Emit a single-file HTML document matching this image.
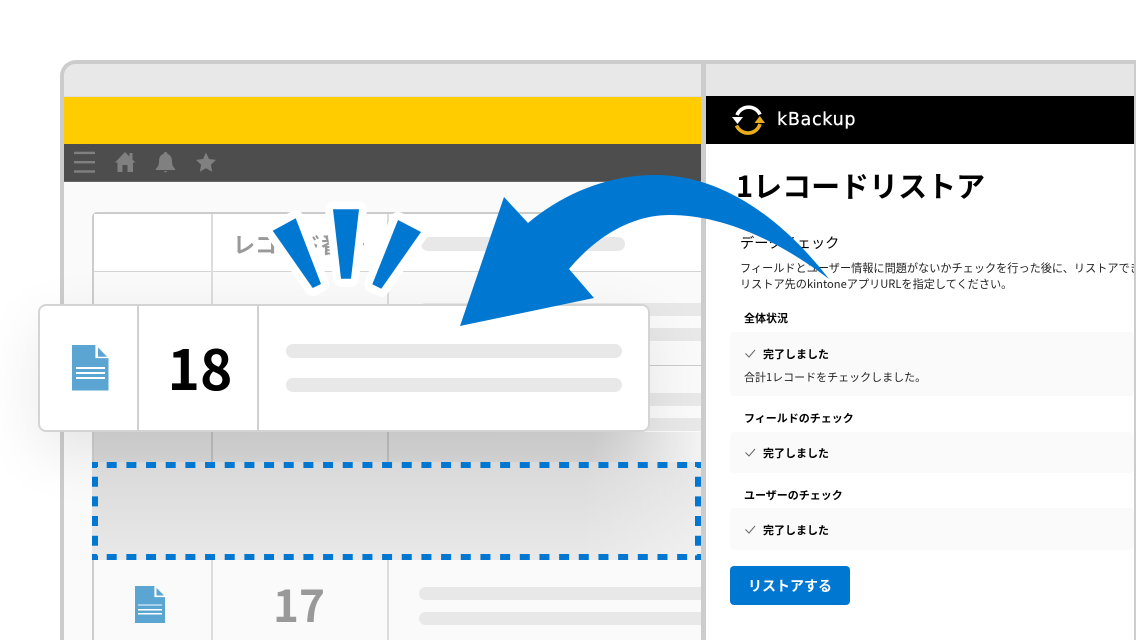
<!DOCTYPE html>
<html lang="ja"><head><meta charset="utf-8"><title>kBackup</title>
<style>
html,body{margin:0;padding:0;background:#fff}
#p{position:relative;width:1136px;height:640px;overflow:hidden;background:#fff;font-family:"Noto Sans CJK JP","Liberation Sans",sans-serif;color:#000}
#p div{position:absolute;box-sizing:border-box}
.t{white-space:nowrap;line-height:20px;height:20px}
.bar{background:#e8e8e8;border-radius:7px;height:14px}
.rb{left:419px;width:282px;border-radius:7px 0 0 7px}
.b11{font-size:11px;font-weight:700}
.box{left:730px;width:404px;background:#fafafa;border-radius:4px}
svg{position:absolute;left:0;top:0}
</style></head><body><div id="p">

<div style="left:60px;top:60px;width:1076px;height:580px;background:#fafafa;border:solid #ccc;border-width:4px 0 0 4px;border-top-left-radius:16px"></div>
<div style="left:64px;top:64px;width:637px;height:32px;background:#e8e8e8;border-top-left-radius:12px"></div>
<div style="left:64px;top:96px;width:637px;height:1px;background:#ddd"></div>
<div style="left:64px;top:97px;width:637px;height:47px;background:#fc0"></div>
<div style="left:64px;top:144px;width:637px;height:38px;background:#4d4d4d;border-bottom:1px solid #666"></div>

<svg width="1136" height="640" viewBox="0 0 1136 640" fill="#808080">
<rect x="74" y="151.7" width="21" height="2.4"/><rect x="74" y="161" width="21" height="2.4"/><rect x="74" y="170.3" width="21" height="2.4"/>
<path d="M125 152l4.500 4.500V153h3v6.500l3 3h-2.500V172H127.500v-7h-5v7H117.500V162.500H115z"/>
<path d="M165.500 152c1.300 0 2 .9 2 2 3.500 1 4.500 4 4.500 7.500 0 4 1.500 5.500 3.200 7.500v1h-19.400v-1c1.700-2 3.200-3.500 3.200-7.500 0-3.500 1-6.500 4.500-7.500 0-1.100.7-2 2-2zM163.500 171h4l-2 1.500z"/>
<path d="M206 152.500l3 6.500 7 .9-5.100 4.800 1.300 7-6.200-3.500-6.200 3.500 1.300-7-5.100-4.800 7-.9z"/>
</svg>

<!-- table -->
<div style="left:92px;top:212px;width:609px;height:428px;border:solid #ccc;border-width:2px 0 0 2px;border-top-left-radius:5px;background:#fafafa"></div>
<div style="left:94px;top:214px;width:607px;height:57px;background:#fff"></div>
<div style="left:94px;top:271px;width:607px;height:1px;background:#d4d4d4"></div>
<div style="left:94px;top:365px;width:607px;height:1px;background:#ccc"></div>
<div style="left:211px;top:214px;width:2px;height:426px;background:#dcdcdc"></div>
<div style="left:387px;top:214px;width:2px;height:426px;background:#dcdcdc"></div>
<div class="t" style="left:233px;top:233px;font-size:22px;font-weight:700;color:#999;line-height:22px;height:22px">レコード番号</div>
<div class="bar" style="left:421px;top:237px;width:204px"></div>
<div class="bar rb" style="top:302.500px;height:13.500px"></div>
<div class="bar rb" style="top:327.500px;height:13.500px"></div>
<div class="bar rb" style="top:392.500px;height:13.500px"></div>
<div class="bar rb" style="top:417.500px;height:13.500px"></div>

<!-- card shadow -->
<div style="left:38px;top:304px;width:612px;height:128px;border-radius:8px;box-shadow:0 20px 60px rgba(0,0,0,.09)"></div>
<div style="left:94px;top:432px;width:607px;height:30px;background:linear-gradient(to right,rgba(0,0,0,.14) 0,rgba(0,0,0,.14) 82%,rgba(0,0,0,.03) 100%)"></div>
<div style="left:94px;top:462px;width:607px;height:1px;background:#c8c8c8"></div>
<div style="left:92px;top:462px;width:609px;height:98px;background:linear-gradient(to bottom,#d9d9d9,#e9e9e9)"></div>
<div style="left:92px;top:462px;width:609px;height:98px;background:linear-gradient(to right,rgba(255,255,255,0) 80%,rgba(255,255,255,.35) 100%)"></div>

<!-- bottom row covers shadow -->
<div style="left:64px;top:560px;width:637px;height:80px;background:#fafafa"></div>
<div style="left:92px;top:560px;width:2px;height:80px;background:#ccc"></div>
<div style="left:211px;top:560px;width:2px;height:80px;background:#dcdcdc"></div>
<div style="left:387px;top:560px;width:2px;height:80px;background:#dcdcdc"></div>
<div class="bar rb" style="top:586.700px;height:13.500px"></div>
<div class="bar rb" style="top:611.700px;height:13.500px"></div>
<div class="t" style="left:273px;top:573px;font-size:44px;font-weight:700;color:#999;line-height:60px;height:60px;width:52px;text-align:center">17</div>
<svg width="1136" height="640" viewBox="0 0 1136 640">
<path d="M135 586h20l10 10v27h-30z" fill="#5aa5d2"/>
<path d="M155 586v10.500h10.500" fill="#fff" stroke="#fff" stroke-width="1.200"/><path d="M156.500 588l7.500 7.500h-7.500z" fill="#5aa5d2"/>
<rect x="138" y="604" width="24" height="2" fill="#a8d0e8"/><rect x="138" y="609" width="24" height="1.500" fill="#fff"/><rect x="138" y="613" width="24" height="1.500" fill="#fff"/>
<g fill="none" stroke="#0078d2" stroke-width="6" stroke-dasharray="10 9.670">
<path d="M92 465H701" stroke-dashoffset="4.970"/>
<path d="M92 557H701" stroke-dashoffset="4.970"/>
<path d="M95 462V560" stroke-dashoffset="4.970"/>
<path d="M698 462V560" stroke-dashoffset="4.970"/>
</g>
</svg>

<div style="left:38px;top:304px;width:612px;height:128px;background:#fff;border:2px solid #d4d4d4;border-radius:8px"></div>
<div style="left:137px;top:305px;width:2px;height:126px;background:#d0d0d0"></div>
<div style="left:257px;top:305px;width:2px;height:126px;background:#d0d0d0"></div>
<div class="bar" style="left:286px;top:344px;width:336px"></div>
<div class="bar" style="left:286px;top:378px;width:336px"></div>
<div class="t" style="left:160px;top:328px;width:80px;text-align:center;font-size:55px;font-weight:700;line-height:76px;height:76px">18</div>
<svg width="1136" height="640" viewBox="0 0 1136 640">
<path d="M72 345h24l12.500 12.500V390.500H72z" fill="#5aa5d2"/>
<path d="M96 345v12.500h12.500" fill="#fff" stroke="#fff" stroke-width="1.200"/><path d="M98 347.500l9 9.200h-9z" fill="#5aa5d2"/>
<rect x="76" y="367" width="29" height="2" fill="#fff"/><rect x="76" y="372" width="29" height="2" fill="#fff"/><rect x="76" y="377" width="29" height="2" fill="#fff"/>
</svg>

<!-- right panel -->
<div style="left:701px;top:64px;width:5px;height:576px;background:#ccc"></div>
<div style="left:706px;top:64px;width:428px;height:32px;background:#e6e6e6"></div>
<div style="left:706px;top:96px;width:428px;height:48px;background:#000"></div>
<div style="left:706px;top:144px;width:428px;height:496px;background:#fff"></div>
<div style="left:1134px;top:64px;width:2px;height:576px;background:#ccc"></div>
<svg width="1136" height="640" viewBox="0 0 1136 640">
<path d="M737 115A12.500 12.500 0 0 1 760 114.500" fill="none" stroke="#fff" stroke-width="3.600"/>
<path d="M732 117h11l-5.500 7z" fill="#fff"/>
<path d="M736.500 125.500A12.500 12.500 0 0 0 760 124" fill="none" stroke="#e8ac1c" stroke-width="3.600"/>
<path d="M754.500 123h10.500l-5.200-7z" fill="#e8ac1c"/>
</svg>
<div class="t" style="left:777px;top:108px;font-family:'DejaVu Sans',sans-serif;font-size:17.500px;color:#fff;line-height:24px;height:24px;letter-spacing:.7px;-webkit-text-stroke:.25px #fff">kBackup</div>
<div class="t" style="left:736px;top:165px;font-size:29px;font-weight:700;line-height:40px;height:40px">1レコードリストア</div>
<div class="t" style="left:740px;top:233px;font-size:14.200px">データチェック</div>
<div style="left:740px;top:260px;width:394px;height:32px;overflow:hidden;font-size:11.170px;line-height:16px;white-space:nowrap;color:#222">フィールドとユーザー情報に問題がないかチェックを行った後に、リストアできます。<br>リストア先のkintoneアプリURLを指定してください。</div>

<div class="t b11" style="left:744px;top:308px">全体状況</div>
<div class="box" style="top:332px;height:64px"></div>
<div class="t b11" style="left:763px;top:344px">完了しました</div>
<div class="t" style="left:744px;top:367px;font-size:11px;color:#222">合計1レコードをチェックしました。</div>
<div class="t b11" style="left:744px;top:408px">フィールドのチェック</div>
<div class="box" style="top:432px;height:41px"></div>
<div class="t b11" style="left:763px;top:443px">完了しました</div>
<div class="t b11" style="left:744px;top:485px">ユーザーのチェック</div>
<div class="box" style="top:508px;height:42px"></div>
<div class="t b11" style="left:763px;top:520px">完了しました</div>
<svg width="1136" height="640" viewBox="0 0 1136 640" fill="none" stroke="#666" stroke-width="1">
<path d="M745.500 353.500l3.500 3.500 6-7"/><path d="M745.500 452.500l3.500 3.500 6-7"/><path d="M745.500 529.500l3.500 3.500 6-7"/>
</svg>
<div style="left:730px;top:566px;width:120px;height:39px;background:#0078d2;border-radius:4px"></div>
<div class="t" style="left:730px;top:576px;width:120px;text-align:center;font-size:14px;font-weight:700;color:#fff">リストアする</div>

<!-- arrow + sparks -->
<svg width="1136" height="640" viewBox="0 0 1136 640">
<path d="M460 326L504 197L528 223C565 192 610 175 655 175C725 175 785 222 829 279C775 238 720 215 670 215C630 215 595 238 569 269L594 298Z" fill="#0078d2"/>
<g fill="#0078d2" stroke="#fff" stroke-width="16" stroke-linejoin="round" paint-order="stroke">
<path d="M272.700 230.700L295.700 218.300L321 284L312.700 288Z"/>
<path d="M333 209.300H359L351 278.700H341Z"/>
<path d="M398 220L421 232L381.300 288.700L372.300 284.300Z"/>
</g>
</svg>
</div></body></html>
